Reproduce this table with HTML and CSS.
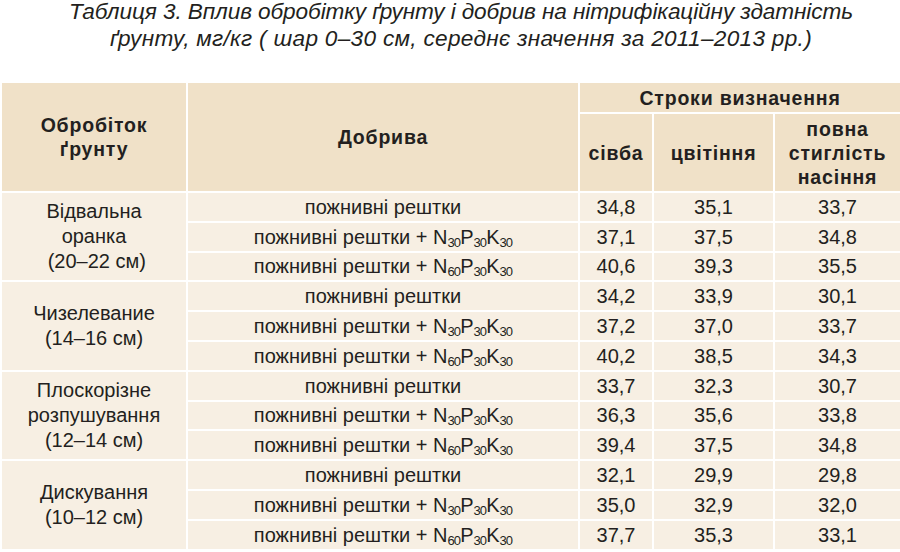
FILE: index.html
```html
<!DOCTYPE html>
<html lang="uk">
<head>
<meta charset="utf-8">
<title>Таблиця 3</title>
<link rel="stylesheet" href="styles.css">
</head>
<body>
<div class="title">
  <div>Таблиця 3. Вплив обробітку ґрунту і добрив на нітрифікаційну здатність</div>
  <div class="t2">ґрунту, мг/кг ( шар 0–30 см, середнє значення за 2011–2013 рр.)</div>
</div>
<table class="tbl">
  <colgroup>
    <col class="c1"><col class="c2"><col class="c3"><col class="c4"><col class="c5">
  </colgroup>
  <thead>
    <tr class="h1">
      <th rowspan="2">Обробіток<br>ґрунту</th>
      <th rowspan="2">Добрива</th>
      <th colspan="3">Строки визначення</th>
    </tr>
    <tr class="h2">
      <th>сівба</th>
      <th>цвітіння</th>
      <th>повна<br>стиглість<br>насіння</th>
    </tr>
  </thead>
  <tbody>
    <tr><td rowspan="3" class="tl">Відвальна<br>оранка<br>&nbsp;(20–22 см)</td><td>пожнивні рештки</td><td>34,8</td><td>35,1</td><td>33,7</td></tr>
    <tr><td>пожнивні рештки + N<sub>30</sub>P<sub>30</sub>K<sub>30</sub></td><td>37,1</td><td>37,5</td><td>34,8</td></tr>
    <tr><td>пожнивні рештки + N<sub>60</sub>P<sub>30</sub>K<sub>30</sub></td><td>40,6</td><td>39,3</td><td>35,5</td></tr>

    <tr><td rowspan="3" class="tl">Чизелевание<br>(14–16 см)</td><td>пожнивні рештки</td><td>34,2</td><td>33,9</td><td>30,1</td></tr>
    <tr><td>пожнивні рештки + N<sub>30</sub>P<sub>30</sub>K<sub>30</sub></td><td>37,2</td><td>37,0</td><td>33,7</td></tr>
    <tr><td>пожнивні рештки + N<sub>60</sub>P<sub>30</sub>K<sub>30</sub></td><td>40,2</td><td>38,5</td><td>34,3</td></tr>

    <tr><td rowspan="3" class="tl">Плоскорізне<br>розпушування<br>(12–14 см)</td><td>пожнивні рештки</td><td>33,7</td><td>32,3</td><td>30,7</td></tr>
    <tr><td>пожнивні рештки + N<sub>30</sub>P<sub>30</sub>K<sub>30</sub></td><td>36,3</td><td>35,6</td><td>33,8</td></tr>
    <tr><td>пожнивні рештки + N<sub>60</sub>P<sub>30</sub>K<sub>30</sub></td><td>39,4</td><td>37,5</td><td>34,8</td></tr>

    <tr><td rowspan="3" class="tl">Дискування<br>(10–12 см)</td><td>пожнивні рештки</td><td>32,1</td><td>29,9</td><td>29,8</td></tr>
    <tr><td>пожнивні рештки + N<sub>30</sub>P<sub>30</sub>K<sub>30</sub></td><td>35,0</td><td>32,9</td><td>32,0</td></tr>
    <tr><td>пожнивні рештки + N<sub>60</sub>P<sub>30</sub>K<sub>30</sub></td><td>37,7</td><td>35,3</td><td>33,1</td></tr>
  </tbody>
</table>
</body>
</html>
```
FILE: styles.css
```css
html, body {
  margin: 0;
  padding: 0;
  background: #ffffff;
}
body {
  width: 900px;
  height: 552px;
  overflow: hidden;
  font-family: "Liberation Sans", Arial, sans-serif;
  color: #231f20;
}
.title {
  padding-left: 22px;
  margin-top: -2px;
  text-align: center;
  font-style: italic;
  font-size: 22.6px;
  line-height: 27px;
  letter-spacing: -0.1px;
  color: #231f20;
}
.title .t2 {
  letter-spacing: 0.3px;
}
.tbl {
  margin-top: 31px;
  margin-left: 2px;
  width: 898px;
  table-layout: fixed;
  border-collapse: collapse;
  font-size: 20px;
}
.c1 { width: 185px; }
.c2 { width: 392px; }
.c3 { width: 74px; }
.c4 { width: 121px; }
.c5 { width: 126px; }
.tbl th, .tbl td {
  border: 2px solid #ffffff;
  padding: 0;
  text-align: center;
  vertical-align: middle;
}
.tbl th {
  background: #f0e1c8;
  font-weight: bold;
  font-size: 19.5px;
  letter-spacing: 0.8px;
  line-height: 24px;
}
.tbl thead tr:first-child th { border-top: none; }
.tbl th:first-child, .tbl td.tl { border-left: none; }
.tbl th:last-child, .tbl td:last-child { border-right: none; }
.h1 { height: 30px; }
.h2 { height: 79px; }
.tbl td {
  background: #f7efe3;
  height: 27.8px;
  line-height: 24px;
}
.tbl td.tl {
  line-height: 25px;
}
.tbl sub {
  font-size: 13px;
  letter-spacing: -0.9px;
  vertical-align: -3px;
  line-height: 0;
}
```
